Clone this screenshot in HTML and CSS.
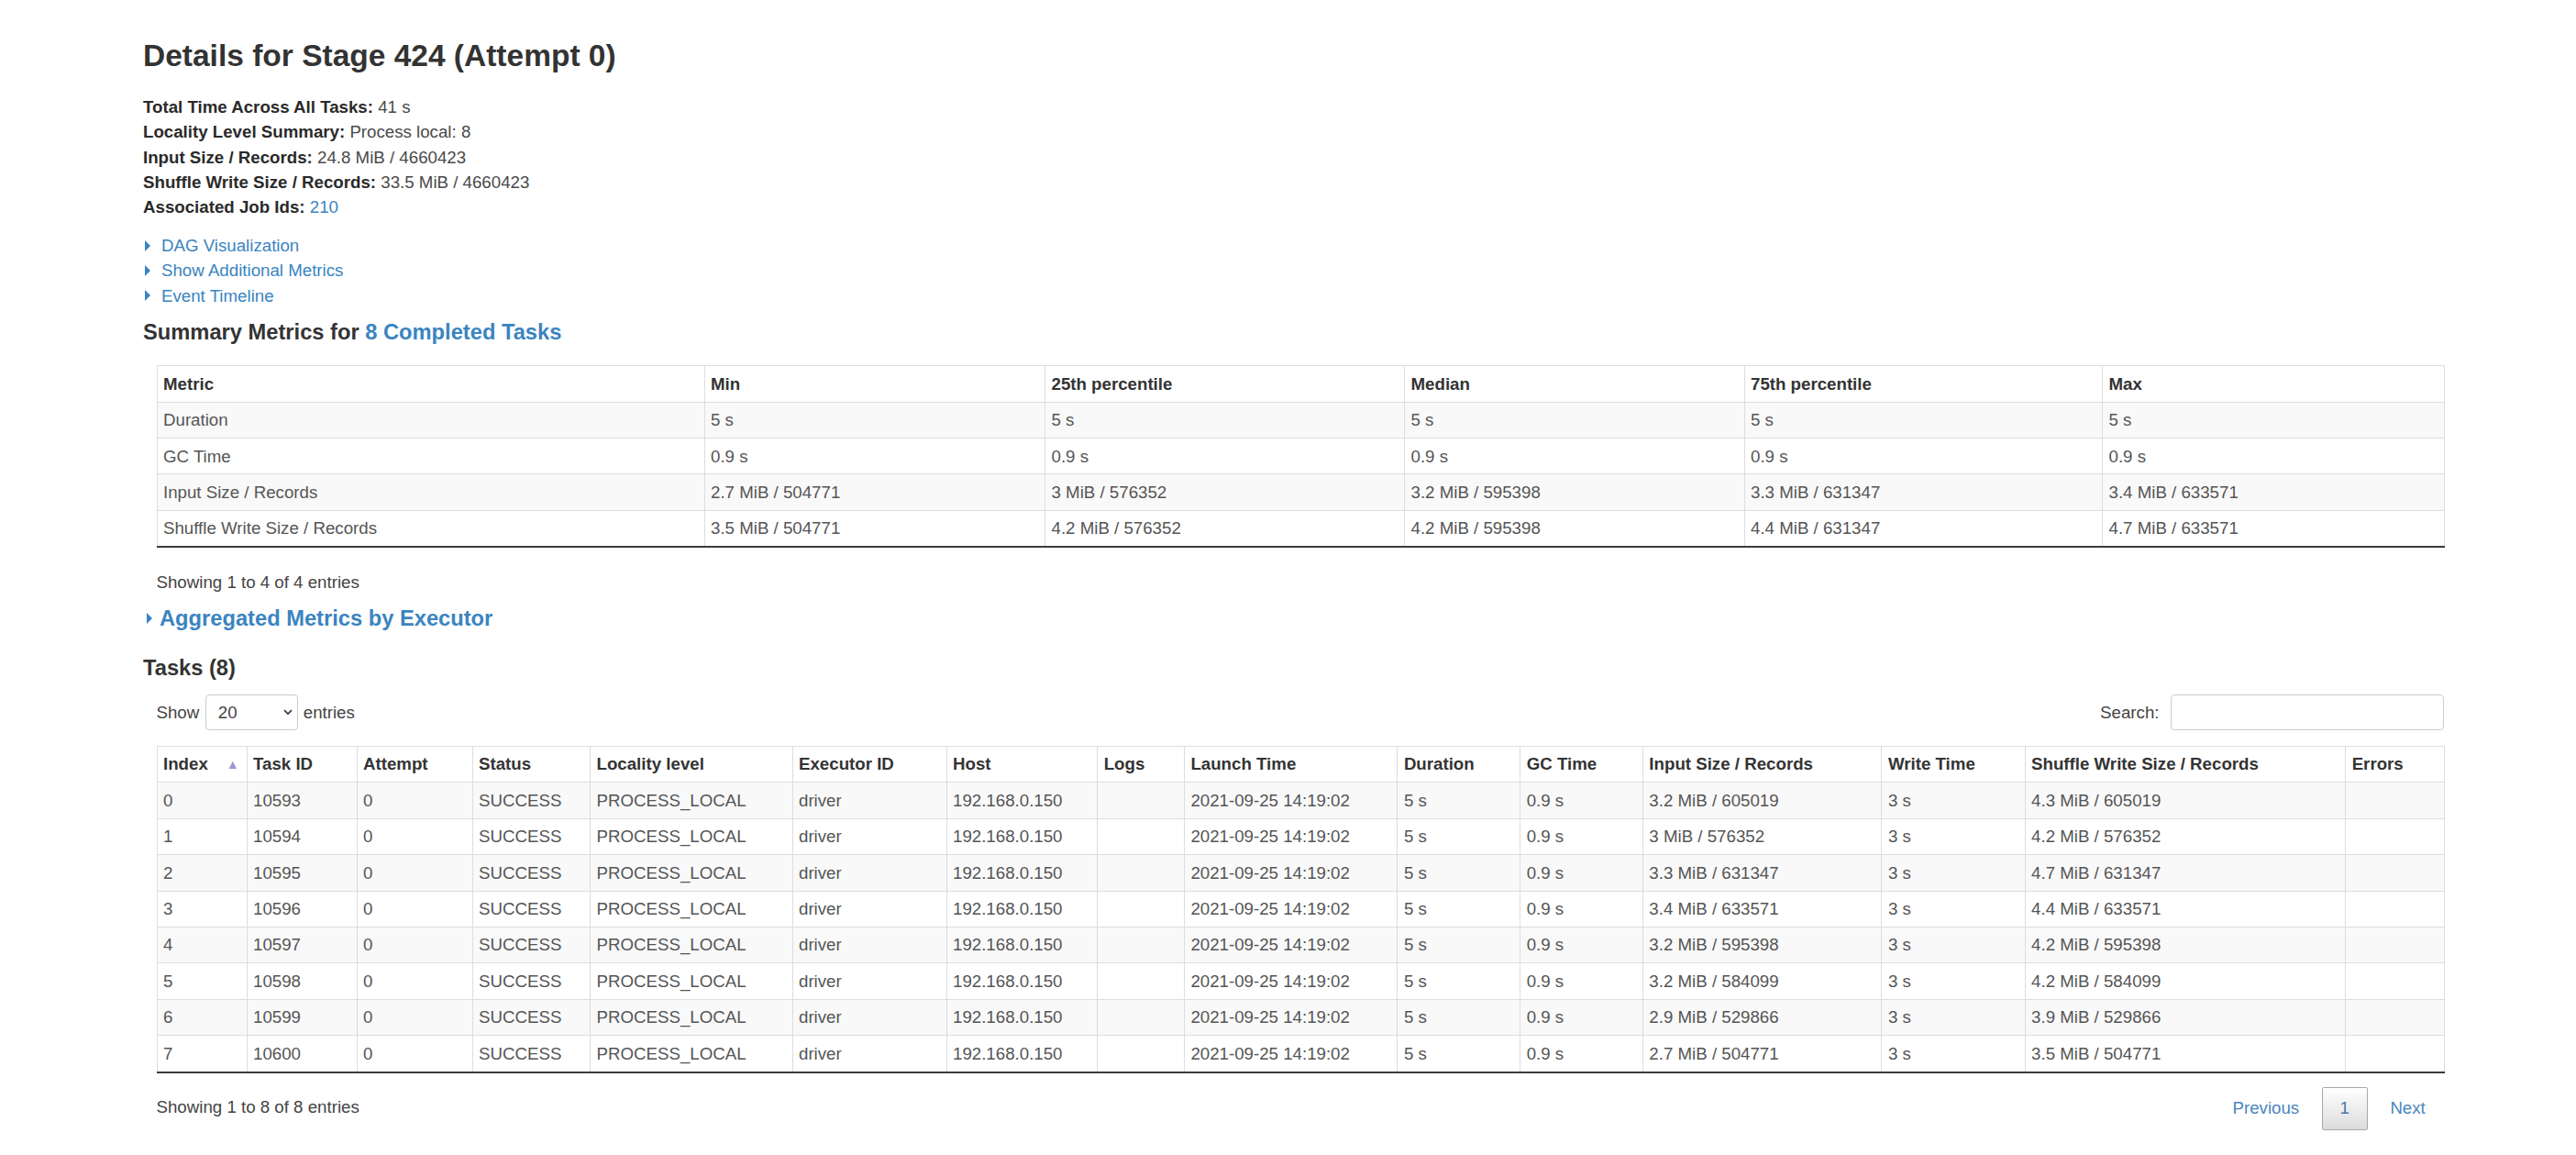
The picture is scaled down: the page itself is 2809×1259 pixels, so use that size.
FILE: index.html
```html
<!DOCTYPE html>
<html lang="en">
<head>
<meta charset="utf-8">
<title>Details for Stage 424 (Attempt 0)</title>
<link rel="stylesheet" href="styles.css">
</head>
<body>
<div class="page">
  <h3 class="title">Details for Stage 424 (Attempt 0)</h3>

  <ul class="summary">
    <li><strong>Total Time Across All Tasks:</strong> 41 s</li>
    <li><strong>Locality Level Summary:</strong> Process local: 8</li>
    <li><strong>Input Size / Records:</strong> 24.8 MiB / 4660423</li>
    <li><strong>Shuffle Write Size / Records:</strong> 33.5 MiB / 4660423</li>
    <li><strong>Associated Job Ids:</strong> <a class="link" href="#">210</a></li>
  </ul>

  <div class="toggles">
    <div class="toggle"><span class="arrow"></span><a class="link" href="#">DAG Visualization</a></div>
    <div class="toggle"><span class="arrow"></span><a class="link" href="#">Show Additional Metrics</a></div>
    <div class="toggle"><span class="arrow"></span><a class="link" href="#">Event Timeline</a></div>
  </div>

  <h4 class="section section-summary">Summary Metrics for <a class="link" href="#">8 Completed Tasks</a></h4>

  <div class="tbl-wrap">
    <table class="grid metrics">
      <colgroup>
        <col class="m-c1"><col class="m-c2"><col class="m-c3"><col class="m-c4"><col class="m-c5"><col class="m-c6">
      </colgroup>
      <thead>
        <tr><th>Metric</th><th>Min</th><th>25th percentile</th><th>Median</th><th>75th percentile</th><th>Max</th></tr>
      </thead>
      <tbody>
        <tr><td>Duration</td><td>5 s</td><td>5 s</td><td>5 s</td><td>5 s</td><td>5 s</td></tr>
        <tr><td>GC Time</td><td>0.9 s</td><td>0.9 s</td><td>0.9 s</td><td>0.9 s</td><td>0.9 s</td></tr>
        <tr><td>Input Size / Records</td><td>2.7 MiB / 504771</td><td>3 MiB / 576352</td><td>3.2 MiB / 595398</td><td>3.3 MiB / 631347</td><td>3.4 MiB / 633571</td></tr>
        <tr><td>Shuffle Write Size / Records</td><td>3.5 MiB / 504771</td><td>4.2 MiB / 576352</td><td>4.2 MiB / 595398</td><td>4.4 MiB / 631347</td><td>4.7 MiB / 633571</td></tr>
      </tbody>
    </table>
    <div class="info info-summary">Showing 1 to 4 of 4 entries</div>
  </div>

  <h4 class="section section-agg"><span class="arrow"></span><a class="link" href="#">Aggregated Metrics by Executor</a></h4>

  <h4 class="section section-tasks">Tasks (8)</h4>

  <div class="tbl-wrap">
    <div class="controls">
      <div class="length">
        <span>Show</span>
        <span class="select-wrap">
          <select class="select"><option>20</option></select>
          <svg class="chev" width="10" height="7" viewBox="0 0 10 7"><path d="M1 1.2 L5 5.2 L9 1.2" fill="none" stroke="#444" stroke-width="1.8"/></svg>
        </span>
        <span>entries</span>
      </div>
      <label class="search">Search:<input class="search-input" type="search"></label>
    </div>

    <table class="grid tasks">
      <colgroup>
        <col class="t-c1"><col class="t-c2"><col class="t-c3"><col class="t-c4"><col class="t-c5"><col class="t-c6"><col class="t-c7"><col class="t-c8"><col class="t-c9"><col class="t-c10"><col class="t-c11"><col class="t-c12"><col class="t-c13"><col class="t-c14"><col class="t-c15">
      </colgroup>
      <thead>
        <tr>
          <th class="sorted">Index<span class="sort-asc">&#9650;</span></th>
          <th>Task ID</th><th>Attempt</th><th>Status</th><th>Locality level</th><th>Executor ID</th><th>Host</th><th>Logs</th><th>Launch Time</th><th>Duration</th><th>GC Time</th><th>Input Size / Records</th><th>Write Time</th><th>Shuffle Write Size / Records</th><th>Errors</th>
        </tr>
      </thead>
      <tbody>
        <tr><td>0</td><td>10593</td><td>0</td><td>SUCCESS</td><td>PROCESS_LOCAL</td><td>driver</td><td>192.168.0.150</td><td></td><td>2021-09-25 14:19:02</td><td>5 s</td><td>0.9 s</td><td>3.2 MiB / 605019</td><td>3 s</td><td>4.3 MiB / 605019</td><td></td></tr>
        <tr><td>1</td><td>10594</td><td>0</td><td>SUCCESS</td><td>PROCESS_LOCAL</td><td>driver</td><td>192.168.0.150</td><td></td><td>2021-09-25 14:19:02</td><td>5 s</td><td>0.9 s</td><td>3 MiB / 576352</td><td>3 s</td><td>4.2 MiB / 576352</td><td></td></tr>
        <tr><td>2</td><td>10595</td><td>0</td><td>SUCCESS</td><td>PROCESS_LOCAL</td><td>driver</td><td>192.168.0.150</td><td></td><td>2021-09-25 14:19:02</td><td>5 s</td><td>0.9 s</td><td>3.3 MiB / 631347</td><td>3 s</td><td>4.7 MiB / 631347</td><td></td></tr>
        <tr><td>3</td><td>10596</td><td>0</td><td>SUCCESS</td><td>PROCESS_LOCAL</td><td>driver</td><td>192.168.0.150</td><td></td><td>2021-09-25 14:19:02</td><td>5 s</td><td>0.9 s</td><td>3.4 MiB / 633571</td><td>3 s</td><td>4.4 MiB / 633571</td><td></td></tr>
        <tr><td>4</td><td>10597</td><td>0</td><td>SUCCESS</td><td>PROCESS_LOCAL</td><td>driver</td><td>192.168.0.150</td><td></td><td>2021-09-25 14:19:02</td><td>5 s</td><td>0.9 s</td><td>3.2 MiB / 595398</td><td>3 s</td><td>4.2 MiB / 595398</td><td></td></tr>
        <tr><td>5</td><td>10598</td><td>0</td><td>SUCCESS</td><td>PROCESS_LOCAL</td><td>driver</td><td>192.168.0.150</td><td></td><td>2021-09-25 14:19:02</td><td>5 s</td><td>0.9 s</td><td>3.2 MiB / 584099</td><td>3 s</td><td>4.2 MiB / 584099</td><td></td></tr>
        <tr><td>6</td><td>10599</td><td>0</td><td>SUCCESS</td><td>PROCESS_LOCAL</td><td>driver</td><td>192.168.0.150</td><td></td><td>2021-09-25 14:19:02</td><td>5 s</td><td>0.9 s</td><td>2.9 MiB / 529866</td><td>3 s</td><td>3.9 MiB / 529866</td><td></td></tr>
        <tr><td>7</td><td>10600</td><td>0</td><td>SUCCESS</td><td>PROCESS_LOCAL</td><td>driver</td><td>192.168.0.150</td><td></td><td>2021-09-25 14:19:02</td><td>5 s</td><td>0.9 s</td><td>2.7 MiB / 504771</td><td>3 s</td><td>3.5 MiB / 504771</td><td></td></tr>
      </tbody>
    </table>

    <div class="table-footer">
      <div class="info info-tasks">Showing 1 to 8 of 8 entries</div>
      <div class="paginate">
        <a class="page-btn" href="#">Previous</a>
        <a class="page-btn current" href="#">1</a>
        <a class="page-btn" href="#">Next</a>
      </div>
    </div>
  </div>
</div>
</body>
</html>
```

FILE: styles.css
```css
* {
  box-sizing: border-box;
}

html, body {
  margin: 0;
  background: #ffffff;
}

body {
  font-family: "Liberation Sans", Arial, sans-serif;
  font-size: 18.7px;
  line-height: 27.2px;
  color: #333333;
}

.page {
  width: 2665px;
  padding: 40.5px 0 40px 156px;
}

.link {
  color: #3a84c1;
  text-decoration: none;
}

.title {
  margin: 0;
  font-size: 33.5px;
  line-height: 40px;
  font-weight: 700;
  color: #333333;
}

.summary {
  list-style: none;
  margin: 22.6px 0 0;
  padding: 0;
  color: #4a4a4a;
}

.summary strong {
  color: #2a2a2a;
  font-weight: 700;
}

.toggles {
  margin-top: 15px;
}

.toggle {
  display: flex;
  align-items: center;
}

.arrow {
  display: inline-block;
  width: 0;
  height: 0;
  border-top: 6px solid transparent;
  border-bottom: 6px solid transparent;
  border-left: 6px solid #3a84c1;
  margin: 0 12px 0 2px;
}

.section {
  margin: 0;
  font-size: 23.7px;
  line-height: 28.4px;
  font-weight: 700;
  color: #333333;
}

.section-summary {
  margin-top: 11.8px;
}

.section-agg {
  display: flex;
  align-items: center;
  margin-top: 11.5px;
}

.section-agg .arrow {
  margin: 0 8px 0 4px;
}

.section-tasks {
  margin-top: 25.9px;
}

.tbl-wrap {
  margin-left: 14.5px;
  width: 2494px;
}

.section-summary + .tbl-wrap {
  margin-top: 22.3px;
}

.grid {
  width: 2494px;
  table-layout: fixed;
  border-collapse: collapse;
}

.grid th,
.grid td {
  border: 1px solid #dddddd;
  padding: 6.5px 6.5px;
  line-height: 25.4px;
  text-align: left;
  white-space: nowrap;
  overflow: hidden;
}

.grid th {
  font-weight: 700;
  color: #333333;
  background: #ffffff;
}

.grid td {
  color: #555555;
}

.grid tbody tr:nth-child(odd) td {
  background: #f9f9f9;
}

.grid tbody tr:last-child td {
  border-bottom: 2px solid #3a3a3a;
}

.m-c1 { width: 597px; }
.m-c2 { width: 371.5px; }
.m-c3 { width: 392px; }
.m-c4 { width: 370.5px; }
.m-c5 { width: 390.5px; }
.m-c6 { width: 372.5px; }

.t-c1 { width: 98px; }
.t-c2 { width: 120px; }
.t-c3 { width: 126px; }
.t-c4 { width: 128.5px; }
.t-c5 { width: 220.5px; }
.t-c6 { width: 168px; }
.t-c7 { width: 164.7px; }
.t-c8 { width: 94.7px; }
.t-c9 { width: 232.5px; }
.t-c10 { width: 133.8px; }
.t-c11 { width: 133.7px; }
.t-c12 { width: 260.6px; }
.t-c13 { width: 156.1px; }
.t-c14 { width: 349.6px; }
.t-c15 { width: 107.8px; }

.sorted {
  position: relative;
}

.sort-asc {
  position: absolute;
  right: 8px;
  top: 50%;
  transform: translateY(-50%);
  font-size: 14px;
  line-height: 14px;
  color: #9d97d6;
}

.info {
  color: #444444;
}

.info-summary {
  margin-top: 23.6px;
}

.controls {
  display: flex;
  justify-content: space-between;
  align-items: center;
  margin-top: 14.7px;
  margin-bottom: 16.7px;
  height: 39.3px;
}

.length {
  display: flex;
  align-items: center;
  color: #444444;
}

.select-wrap {
  position: relative;
  display: inline-block;
  margin: 0 6px 0 6.5px;
  height: 39.3px;
}

.select {
  appearance: none;
  -webkit-appearance: none;
  width: 101px;
  height: 39.3px;
  border: 1px solid #cccccc;
  border-radius: 4px;
  background: #ffffff;
  padding: 0 0 0 13px;
  font-family: "Liberation Sans", Arial, sans-serif;
  font-size: 18.7px;
  color: #444444;
}

.chev {
  position: absolute;
  right: 6px;
  top: 16.5px;
}

.search {
  display: flex;
  align-items: center;
  color: #444444;
}

.search-input {
  width: 298px;
  height: 39.3px;
  margin-left: 12px;
  border: 1px solid #cccccc;
  border-radius: 4px;
  background: #ffffff;
}

.table-footer {
  display: flex;
  justify-content: space-between;
  align-items: flex-start;
}

.info-tasks {
  margin-top: 23.3px;
}

.paginate {
  display: flex;
  margin-top: 15px;
}

.page-btn {
  display: block;
  padding: 9.35px 18.7px;
  line-height: 26.4px;
  border: 1px solid transparent;
  border-radius: 2px;
  margin-left: 5px;
  color: #4a86bd;
  text-decoration: none;
}

.page-btn.current {
  border-color: #a8a8a8;
  background: linear-gradient(to bottom, #ffffff 0%, #dcdcdc 100%);
  color: #4b76a8;
}
```
